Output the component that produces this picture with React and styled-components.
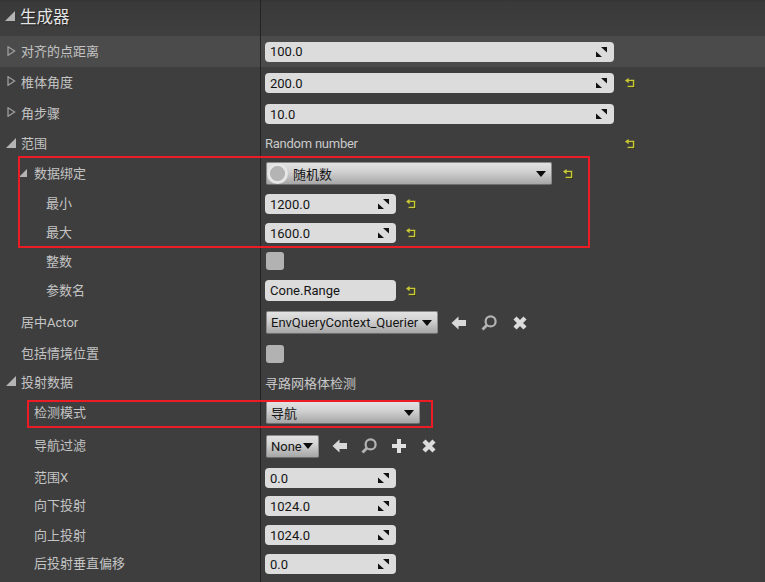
import React from 'react';
import styled, { createGlobalStyle } from 'styled-components';

const GlobalStyle = createGlobalStyle`
  html, body { margin: 0; padding: 0; background: #3e3e3e; }
`;

const Panel = styled.div`
  position: relative;
  width: 765px;
  height: 582px;
  overflow: hidden;
  background: #3e3e3e;
  font-family: 'Roboto', 'Noto Sans CJK SC', sans-serif;
  font-size: 13px;
  color: #c9c9c9;
`;

const Header = styled.div`
  display: flex;
  height: 36px;
  background: linear-gradient(#343434 0, #3a3a3a 3px, #3f3f3f 100%);
`;

const Row = styled.div`
  display: flex;
  height: ${p => p.$h}px;
  background: ${p => (p.$hover ? '#4b4b4b' : 'transparent')};
`;

const NameCell = styled.div`
  box-sizing: border-box;
  width: 260px;
  flex: none;
  display: flex;
  align-items: center;
  padding-left: ${p => p.$indent}px;
  padding-bottom: ${p => p.$lift || 2}px;
`;

const ValueCell = styled.div`
  flex: 1;
  display: flex;
  align-items: center;
  padding-left: 4px;
  border-left: 1px solid #232323;
`;

const Title = styled.span`
  font-family: 'Noto Sans CJK SC', sans-serif;
  font-size: 16.5px;
  color: #e4e4e4;
  text-shadow: 1px 1px 1px #1c1c1c;
`;

const Label = styled.span`
  font-family: 'Roboto', 'Noto Sans CJK SC', sans-serif;
  white-space: nowrap;
  color: #c4c4c4;
`;

const Expander = styled.svg`
  flex: none;
  width: ${p => p.$size || 10}px;
  height: ${p => p.$size || 10}px;
  margin-left: ${p => p.$left}px;
  margin-right: ${p => p.$right}px;
`;

const Field = styled.div`
  box-sizing: border-box;
  width: ${p => p.$w}px;
  height: ${p => p.$h || 20}px;
  flex: none;
  display: flex;
  align-items: center;
  justify-content: space-between;
  padding: 0 7px 0 5px;
  border-radius: 4px;
  background: #dcdcdc;
  color: #141414;
  font-size: 13px;
`;

const Dropdown = styled.div`
  box-sizing: border-box;
  width: ${p => p.$w}px;
  height: 23px;
  margin-left: 1px;
  flex: none;
  display: flex;
  align-items: center;
  padding: 0 5px 0 ${p => (p.$flush ? 0 : 4)}px;
  border-radius: 2px;
  border: 1px solid #8c8c8c;
  border-bottom-color: #6e6e6e;
  background: linear-gradient(#e2e2e2 0%, #d2d2d2 40%, #a6a6a6 100%);
  color: #141414;
  white-space: nowrap;
`;

const DropText = styled.span`
  flex: 1;
  font-family: 'Roboto', 'Noto Sans CJK SC', sans-serif;
`;

const Caret = styled.span`
  flex: none;
  width: 0;
  height: 0;
  border-left: 5px solid transparent;
  border-right: 5px solid transparent;
  border-top: 6px solid #0c0c0c;
`;

const Radio = styled.span`
  flex: none;
  box-sizing: border-box;
  width: 21px;
  height: 21px;
  margin-right: 5px;
  border-radius: 50%;
  border: 3px solid #e6e6e6;
  background: radial-gradient(#b4b4b4 60%, #969696 100%);
`;

const Check = styled.div`
  width: 18px;
  height: 18px;
  margin-left: 1px;
  border-radius: 3px;
  background: #b2b2b2;
`;

const Plain = styled.span`
  box-sizing: border-box;
  width: ${p => p.$w}px;
  flex: none;
  color: #c9c9c9;
  letter-spacing: ${p => (p.$tight ? '-0.25px' : '0')};
  margin-top: ${p => (p.$lift ? '-2px' : '0')};
`;

const ResetWrap = styled.svg`
  flex: none;
  width: 10px;
  height: 10px;
  margin-left: ${p => p.$gap || 10}px;
`;

const ToolIcon = styled.svg`
  flex: none;
  width: 16px;
  height: 16px;
  margin-left: ${p => p.$gap}px;
`;

const RedBox = styled.div`
  position: absolute;
  box-sizing: border-box;
  left: ${p => p.$x}px;
  top: ${p => p.$y}px;
  width: ${p => p.$w}px;
  height: ${p => p.$h}px;
  border: 2px solid #ed1c24;
  pointer-events: none;
`;

const Spin = () => (
  <svg width="11" height="10" viewBox="0 0 11 10">
    <path d="M5 0H11V5.5Z" fill="#111" />
    <path d="M0 4.5V10H6Z" fill="#111" />
  </svg>
);

const Reset = ({ gap }) => (
  <ResetWrap $gap={gap} viewBox="0 0 10 10">
    <path d="M3.6 3.4H9.2V9.2H3" fill="none" stroke="#161616" strokeWidth="1.4" />
    <path d="M3 2.6H8.6V8.4H2.6" fill="none" stroke="#c9c936" strokeWidth="1.5" />
    <path d="M0 2.6L3.6 0V5.2Z" fill="#c9c936" />
  </ResetWrap>
);

const NumField = ({ w, value }) => (
  <Field $w={w}>
    <span>{value}</span>
    <Spin />
  </Field>
);

const Tri = ({ open, left, right, size }) => (
  <Expander $left={left} $right={right} $size={size} viewBox="0 0 10 10">
    {open
      ? <path d="M10 0V10H0Z" fill="#b4b4b4" />
      : <path d="M2 0.7L8.6 5L2 9.3Z" fill="none" stroke="#9c9c9c" strokeWidth="1.3" />}
  </Expander>
);

const ArrowIcon = ({ gap }) => (
  <ToolIcon $gap={gap} viewBox="0 0 16 16">
    <path d="M0.5 8L7.5 1.5V5H15V11H7.5V14.5Z" fill="#d8d8d8" />
  </ToolIcon>
);

const SearchIcon = ({ gap }) => (
  <ToolIcon $gap={gap} viewBox="0 0 16 16">
    <circle cx="9.6" cy="6.4" r="5" fill="none" stroke="#b4b4b4" strokeWidth="2.2" />
    <path d="M6 10L1.5 14.5" stroke="#b4b4b4" strokeWidth="2.8" />
  </ToolIcon>
);

const PlusIcon = ({ gap }) => (
  <ToolIcon $gap={gap} viewBox="0 0 16 16">
    <path d="M6 1H10V6H15V10H10V15H6V10H1V6H6Z" fill="#e0e0e0" />
  </ToolIcon>
);

const CloseIcon = ({ gap }) => (
  <ToolIcon $gap={gap} viewBox="0 0 16 16">
    <path d="M3 3L13 13M13 3L3 13" stroke="#dcdcdc" strokeWidth="4.4" />
  </ToolIcon>
);

function App() {
  return (
    <Panel>
      <GlobalStyle />
      <Header>
        <NameCell $indent={0} $lift={4}>
          <Tri open left={5} right={5} />
          <Title>生成器</Title>
        </NameCell>
        <ValueCell />
      </Header>

      <Row $h={31} $hover>
        <NameCell $indent={0}><Tri left={6} right={5} /><Label>对齐的点距离</Label></NameCell>
        <ValueCell><NumField w={349} value="100.0" /></ValueCell>
      </Row>
      <Row $h={32}>
        <NameCell $indent={0} $lift={4}><Tri left={6} right={5} /><Label>椎体角度</Label></NameCell>
        <ValueCell><NumField w={349} value="200.0" /><Reset gap={11} /></ValueCell>
      </Row>
      <Row $h={30}>
        <NameCell $indent={0} $lift={4}><Tri left={6} right={5} /><Label>角步骤</Label></NameCell>
        <ValueCell><NumField w={349} value="10.0" /></ValueCell>
      </Row>
      <Row $h={29}>
        <NameCell $indent={0}><Tri open left={6} right={5} /><Label>范围</Label></NameCell>
        <ValueCell><Plain $w={349} $tight>Random number</Plain><Reset gap={11} /></ValueCell>
      </Row>
      <Row $h={31}>
        <NameCell $indent={0}><Tri open size={8} left={19} right={7} /><Label>数据绑定</Label></NameCell>
        <ValueCell>
          <Dropdown $w={286} $flush><Radio /><DropText>随机数</DropText><Caret /></Dropdown>
          <Reset gap={11} />
        </ValueCell>
      </Row>
      <Row $h={30}>
        <NameCell $indent={46} $lift={4}><Label>最小</Label></NameCell>
        <ValueCell><NumField w={131} value="1200.0" /><Reset /></ValueCell>
      </Row>
      <Row $h={28}>
        <NameCell $indent={46} $lift={4}><Label>最大</Label></NameCell>
        <ValueCell><NumField w={131} value="1600.0" /><Reset /></ValueCell>
      </Row>
      <Row $h={28}>
        <NameCell $indent={46}><Label>整数</Label></NameCell>
        <ValueCell><Check /></ValueCell>
      </Row>
      <Row $h={31}>
        <NameCell $indent={46}><Label>参数名</Label></NameCell>
        <ValueCell>
          <Field $w={131} $h={21}><span>Cone.Range</span></Field>
          <Reset />
        </ValueCell>
      </Row>
      <Row $h={33}>
        <NameCell $indent={21}><Label>居中Actor</Label></NameCell>
        <ValueCell>
          <Dropdown $w={172}><DropText>EnvQueryContext_Querier</DropText><Caret /></Dropdown>
          <ArrowIcon gap={13} />
          <SearchIcon gap={14} />
          <CloseIcon gap={15} />
        </ValueCell>
      </Row>
      <Row $h={30}>
        <NameCell $indent={21} $lift={4}><Label>包括情境位置</Label></NameCell>
        <ValueCell><Check /></ValueCell>
      </Row>
      <Row $h={28}>
        <NameCell $indent={0} $lift={4}><Tri open left={6} right={5} /><Label>投射数据</Label></NameCell>
        <ValueCell><Plain $w={349} $lift>寻路网格体检测</Plain></ValueCell>
      </Row>
      <Row $h={31}>
        <NameCell $indent={34}><Label>检测模式</Label></NameCell>
        <ValueCell>
          <Dropdown $w={154}><DropText>导航</DropText><Caret /></Dropdown>
        </ValueCell>
      </Row>
      <Row $h={36}>
        <NameCell $indent={34} $lift={4}><Label>导航过滤</Label></NameCell>
        <ValueCell>
          <Dropdown $w={53}><DropText>None</DropText><Caret /></Dropdown>
          <ArrowIcon gap={13} />
          <SearchIcon gap={13} />
          <PlusIcon gap={14} />
          <CloseIcon gap={14} />
        </ValueCell>
      </Row>
      <Row $h={28}>
        <NameCell $indent={34} $lift={4}><Label>范围X</Label></NameCell>
        <ValueCell><NumField w={131} value="0.0" /></ValueCell>
      </Row>
      <Row $h={28}>
        <NameCell $indent={34} $lift={4}><Label>向下投射</Label></NameCell>
        <ValueCell><NumField w={131} value="1024.0" /></ValueCell>
      </Row>
      <Row $h={30}>
        <NameCell $indent={34}><Label>向上投射</Label></NameCell>
        <ValueCell><NumField w={131} value="1024.0" /></ValueCell>
      </Row>
      <Row $h={28}>
        <NameCell $indent={34} $lift={4}><Label>后投射垂直偏移</Label></NameCell>
        <ValueCell><NumField w={131} value="0.0" /></ValueCell>
      </Row>
      <Row $h={4}>
        <NameCell $indent={0} $lift={1} />
        <ValueCell />
      </Row>

      <RedBox $x={18} $y={156} $w={572} $h={92} />
      <RedBox $x={27} $y={400} $w={406} $h={28} />
    </Panel>
  );
}

export default App;
